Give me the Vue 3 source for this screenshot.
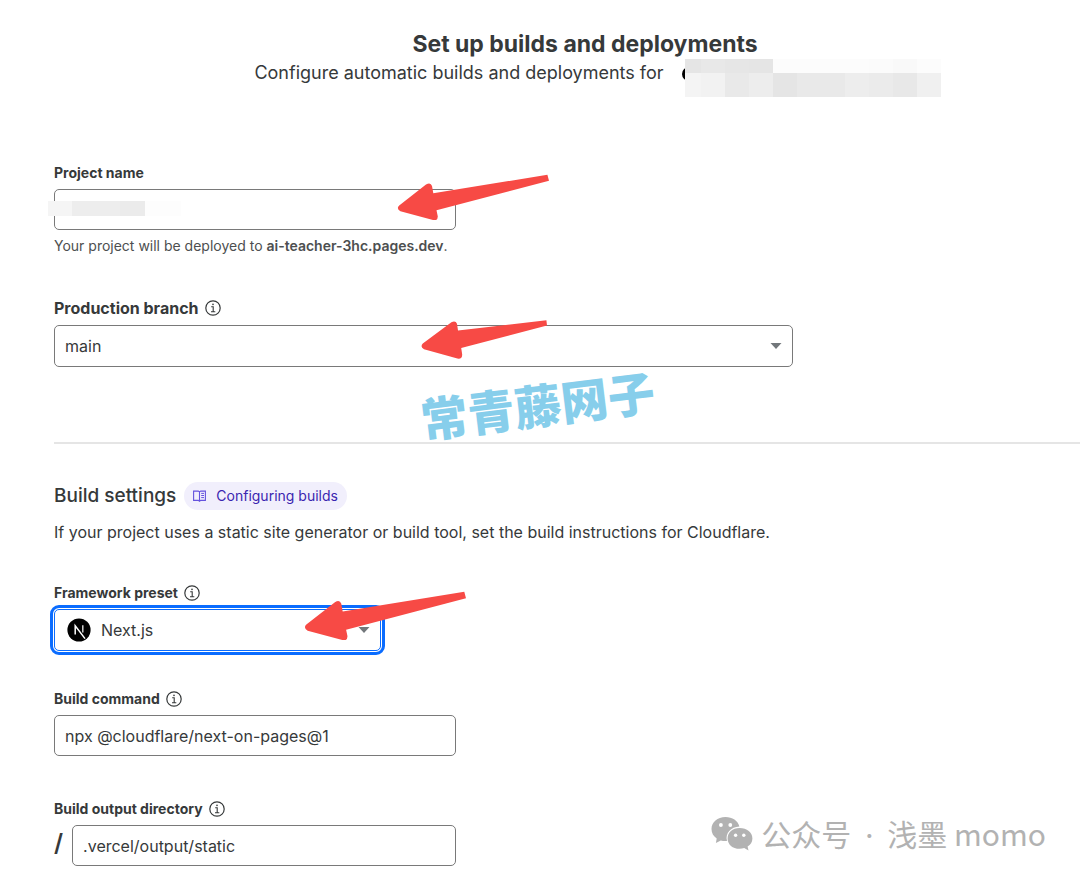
<script setup>
import { ref, h } from 'vue'

const projectName = ref('')
const branch = ref('main')
const preset = ref('Next.js')
const command = ref('npx @cloudflare/next-on-pages@1')
const output = ref('.vercel/output/static')

const repoTiles = [
  [16, '#e5e5e5', '#f4f4f4'], [24, '#e8e8e8', '#f2f2f2'], [24, '#e6e6e6', '#e9e9e9'],
  [24, '#e5e5e5', '#ededed'], [24, '#fcfcfc', '#e5e5e5'], [48, '#fcfcfc', '#e9e9e9'],
  [24, '#fcfcfc', '#ededed'], [24, '#fbfbfb', '#ebebeb'], [24, '#f9f9f9', '#e8e8e8'],
  [24, '#fcfcfc', '#f0f0f0'],
]
const nameTiles = [[24, '#f5f5f5'], [48, '#ededed'], [25, '#ebebeb'], [36, '#fdfdfd']]

const InfoIcon = () =>
  h('svg', { width: 16, height: 16, viewBox: '0 0 16 16', fill: 'none', stroke: '#36393a', 'aria-hidden': 'true' }, [
    h('circle', { cx: 8, cy: 8, r: 7.2, 'stroke-width': 1.2 }),
    h('path', { d: 'M6.2 6.8H8.2V11.6M6 11.7H10.3', 'stroke-width': 1.1 }),
    h('circle', { cx: 8, cy: 4.4, r: 0.8, fill: '#36393a', stroke: 'none' }),
  ])
const CaretIcon = () =>
  h('svg', { width: 12, height: 6, viewBox: '0 0 12 6', 'aria-hidden': 'true' }, [
    h('path', { d: 'M0.5 0H11.5L6 6Z', fill: '#72777b' }),
  ])
const ArrowIcon = () =>
  h('svg', { viewBox: '0 0 152 46', 'aria-hidden': 'true' }, [
    h('path', {
      d: 'M2.2 31.5L29 10.6Q33.5 7.6 35 12L36.3 19.2L150.4 0.8L152 6.8L39.5 36.3L40.8 42.4Q40.6 47.3 36 46L3.4 37.2Q-1 34.6 2.2 31.5Z',
      fill: '#f74a45',
    }),
  ])
</script>

<template>
  <main class="page">
    <header class="intro">
      <h1>Set up builds and deployments</h1>
      <div class="subtitle">
        <span>Configure automatic builds and deployments for</span>
        <span class="repo">
          <i class="avatar"></i>
          <span class="mosaic">
            <span v-for="(t, i) in repoTiles" :key="i" class="column" :style="{ flexGrow: t[0] }">
              <i class="upper" :style="{ background: t[1] }"></i>
              <i class="lower" :style="{ background: t[2] }"></i>
            </span>
          </span>
        </span>
      </div>
    </header>

    <form @submit.prevent>
      <section class="project">
        <div class="field">
          <label for="name">Project name</label>
          <div class="control">
            <input id="name" v-model="projectName" type="text" />
            <span class="name-mosaic">
              <i v-for="(t, i) in nameTiles" :key="i" :style="{ flexGrow: t[0], background: t[1] }"></i>
            </span>
            <ArrowIcon class="arrow arrow-name" />
          </div>
          <p class="help">Your project will be deployed to <b>ai-teacher-3hc.pages.dev</b>.</p>
        </div>

        <div class="field wide">
          <div class="label-row">
            <label for="branch" class="large">Production branch</label>
            <InfoIcon />
          </div>
          <div class="control">
            <select id="branch" v-model="branch"><option>main</option></select>
            <CaretIcon class="caret" />
            <svg class="arrow arrow-branch" viewBox="0 0 126 39" aria-hidden="true">
              <path
                d="M1.8 23.6L30.4 2.2Q34.6 0 36 3.8L37 10.6L125.4 0.2L126 5.6L40.2 28L41.2 34.4Q41.2 39.4 36.4 38.6L3 29.2Q-1.2 26.8 1.8 23.6Z"
                fill="#f74a45"
              />
            </svg>
          </div>
        </div>
        <div class="site-mark">常青藤网子</div>
      </section>

      <section class="build">
        <div class="build-head">
          <h2>Build settings</h2>
          <a href="#configuring" class="pill">
            <svg width="13" height="12" viewBox="0 0 13 12" fill="none" stroke="#6553de" aria-hidden="true">
              <path d="M0.6 1.1H5.3L6.5 1.9L7.7 1.1H12.4V10.4H7.7L6.5 11.3L5.3 10.4H0.6ZM6.5 1.9V11.3" stroke-width="1.1" />
              <path d="M8.2 3.4H11M8.2 5.5H11M8.2 7.6H11" stroke-width="1" />
            </svg>
            Configuring builds
          </a>
        </div>
        <p class="desc">If your project uses a static site generator or build tool, set the build instructions for Cloudflare.</p>

        <div class="field preset">
          <div class="label-row">
            <label for="preset">Framework preset</label>
            <InfoIcon />
          </div>
          <div class="control">
            <select id="preset" v-model="preset" class="focused"><option>Next.js</option></select>
            <svg class="next" width="24" height="24" viewBox="0 0 24 24" aria-hidden="true">
              <circle cx="12" cy="12" r="11.6" fill="#000" />
              <path d="M8.2 16.6V7.8L18 20.6" fill="none" stroke="#fff" stroke-width="1.5" />
              <path d="M15.8 7.2V14.4" stroke="#ddd" stroke-width="1.4" />
            </svg>
            <CaretIcon class="caret" />
            <ArrowIcon class="arrow arrow-preset" />
          </div>
        </div>

        <div class="field">
          <div class="label-row">
            <label for="command">Build command</label>
            <InfoIcon />
          </div>
          <input id="command" v-model="command" type="text" />
        </div>

        <div class="field output">
          <div class="label-row">
            <label for="output">Build output directory</label>
            <InfoIcon />
          </div>
          <div class="prefixed">
            <span class="slash">/</span>
            <input id="output" v-model="output" type="text" />
          </div>
        </div>
      </section>
    </form>

    <div class="credit">
      <svg width="42" height="36" viewBox="0 0 42 36" fill="#b2b2b2" aria-hidden="true">
        <path d="M14.5 1C6.5 1 0.5 6.3 0.5 13C0.5 17 2.4 20.2 5.7 22.5L4.9 27L9.8 24.4C11.8 25 14 25.2 16 24.9C14 17 20 11 28.4 10.5C27 4.8 21.3 1 14.5 1Z" />
        <path d="M28.5 12C21.5 12 16.6 16.7 16.6 22.4C16.6 28.3 21.7 32.8 28.5 32.8C30.2 32.8 31.7 32.6 33.2 32.1L37.5 34.4L36.6 30.6C39.6 28.7 41.4 25.8 41.4 22.4C41.4 16.7 36 12 28.5 12Z" />
        <g fill="#fff">
          <circle cx="9.9" cy="9" r="1.9" /><circle cx="19.3" cy="9" r="1.9" />
          <circle cx="24.6" cy="19.2" r="1.7" /><circle cx="32.8" cy="19.2" r="1.7" />
        </g>
      </svg>
      <span>公众号 <span class="dot">·</span> 浅墨 momo</span>
    </div>
  </main>
</template>

<style>
body {
  margin: 0;
  background: #fff;
}
</style>

<style scoped>
* {
  box-sizing: border-box;
}
.page {
  position: relative;
  overflow: hidden;
  padding: 28px 0 13px 54px;
  font-family: Inter, 'Noto Sans CJK SC', sans-serif;
  font-size: 14px;
  line-height: 20px;
  color: #36393a;
}
h1, h2, p {
  margin: 0;
}
.intro {
  padding-left: 36px;
  text-align: center;
}
h1 {
  font-size: 23px;
  line-height: 32px;
  font-weight: 700;
}
.subtitle {
  display: flex;
  justify-content: center;
  gap: 18px;
  font-size: 18px;
  line-height: 26px;
}
.repo {
  position: relative;
  width: 234px;
}
.avatar {
  position: absolute;
  left: 0;
  top: 7px;
  width: 14px;
  height: 14px;
  border-radius: 50%;
  background: #000;
}
.mosaic {
  position: absolute;
  left: 3px;
  top: -1px;
  display: flex;
  width: 256px;
  height: 38px;
}
.column {
  display: flex;
  flex: 1 1 0;
  flex-direction: column;
}
.upper {
  height: 14px;
}
.lower {
  height: 24px;
}
.project {
  display: flex;
  flex-direction: column;
  gap: 41px;
  position: relative;
  margin-top: 77px;
  padding-bottom: 75px;
  border-bottom: 2px solid #e5e5e5;
}
.field {
  display: flex;
  flex-direction: column;
  gap: 6px;
  max-width: 402px;
}
.wide {
  max-width: 739px;
}
.label-row {
  display: flex;
  align-items: center;
  gap: 6px;
}
label {
  font-weight: 700;
}
.large {
  font-size: 16px;
  line-height: 22px;
}
.control {
  position: relative;
  display: flex;
}
input, select {
  flex: 1;
  width: 100%;
  min-width: 0;
  height: 41px;
  flex-basis: auto;
  margin: 0;
  padding: 0 10px;
  border: 1px solid #797979;
  border-radius: 5px;
  outline: none;
  appearance: none;
  background: #fff;
  font: inherit;
  font-size: 16px;
  color: #36393a;
}
select {
  height: 42px;
}
.help {
  color: #4d4f50;
}
.help b {
  font-weight: 600;
}
.caret {
  position: absolute;
  right: 11px;
  top: 18px;
}
.name-mosaic {
  position: absolute;
  left: -6px;
  top: 12px;
  display: flex;
  width: 133px;
  height: 15px;
}
.arrow {
  position: absolute;
  z-index: 1;
}
.arrow-name {
  left: 343px;
  top: -15px;
  width: 152px;
}
.arrow-branch {
  left: 367px;
  top: -5px;
  width: 126px;
}
.arrow-preset {
  left: 250px;
  top: -18px;
  width: 162px;
}
.site-mark {
  position: absolute;
  left: 366px;
  top: 206px;
  font-family: 'Noto Sans CJK SC', sans-serif;
  font-size: 47px;
  line-height: 70px;
  font-weight: 900;
  color: #87ceeb;
  white-space: nowrap;
  transform: rotate(-7deg);
}
.build {
  display: flex;
  flex-direction: column;
  gap: 38px;
  padding-top: 38px;
}
.build-head {
  display: flex;
  align-items: center;
  gap: 8px;
}
h2 {
  font-size: 19px;
  line-height: 24px;
  font-weight: 500;
}
.pill {
  display: flex;
  align-items: center;
  gap: 10px;
  height: 28px;
  padding: 0 9px;
  border-radius: 14px;
  background: #f1effc;
  color: #3a26b0;
  text-decoration: none;
}
.desc {
  margin-top: -26px;
  margin-bottom: 3px;
  font-size: 16px;
}
.preset {
  max-width: 327px;
}
.output {
  margin-top: 5px;
}
.focused {
  padding-left: 46px;
  border-color: #0a6cff;
  outline: 3px solid #0a6cff;
  outline-offset: 1px;
}
.next {
  position: absolute;
  left: 13px;
  top: 9px;
}
.prefixed {
  display: flex;
  align-items: center;
  gap: 9px;
}
.slash {
  padding-bottom: 6px;
  font-size: 24px;
  font-weight: 600;
}
.credit {
  position: absolute;
  right: 34px;
  bottom: 24px;
  display: flex;
  align-items: center;
  gap: 8px;
  font-family: 'Noto Sans CJK SC', sans-serif;
  font-size: 30px;
  line-height: 40px;
  color: #b2b2b2;
}
.dot {
  padding: 0 7px;
  font-family: Inter, sans-serif;
}
</style>
